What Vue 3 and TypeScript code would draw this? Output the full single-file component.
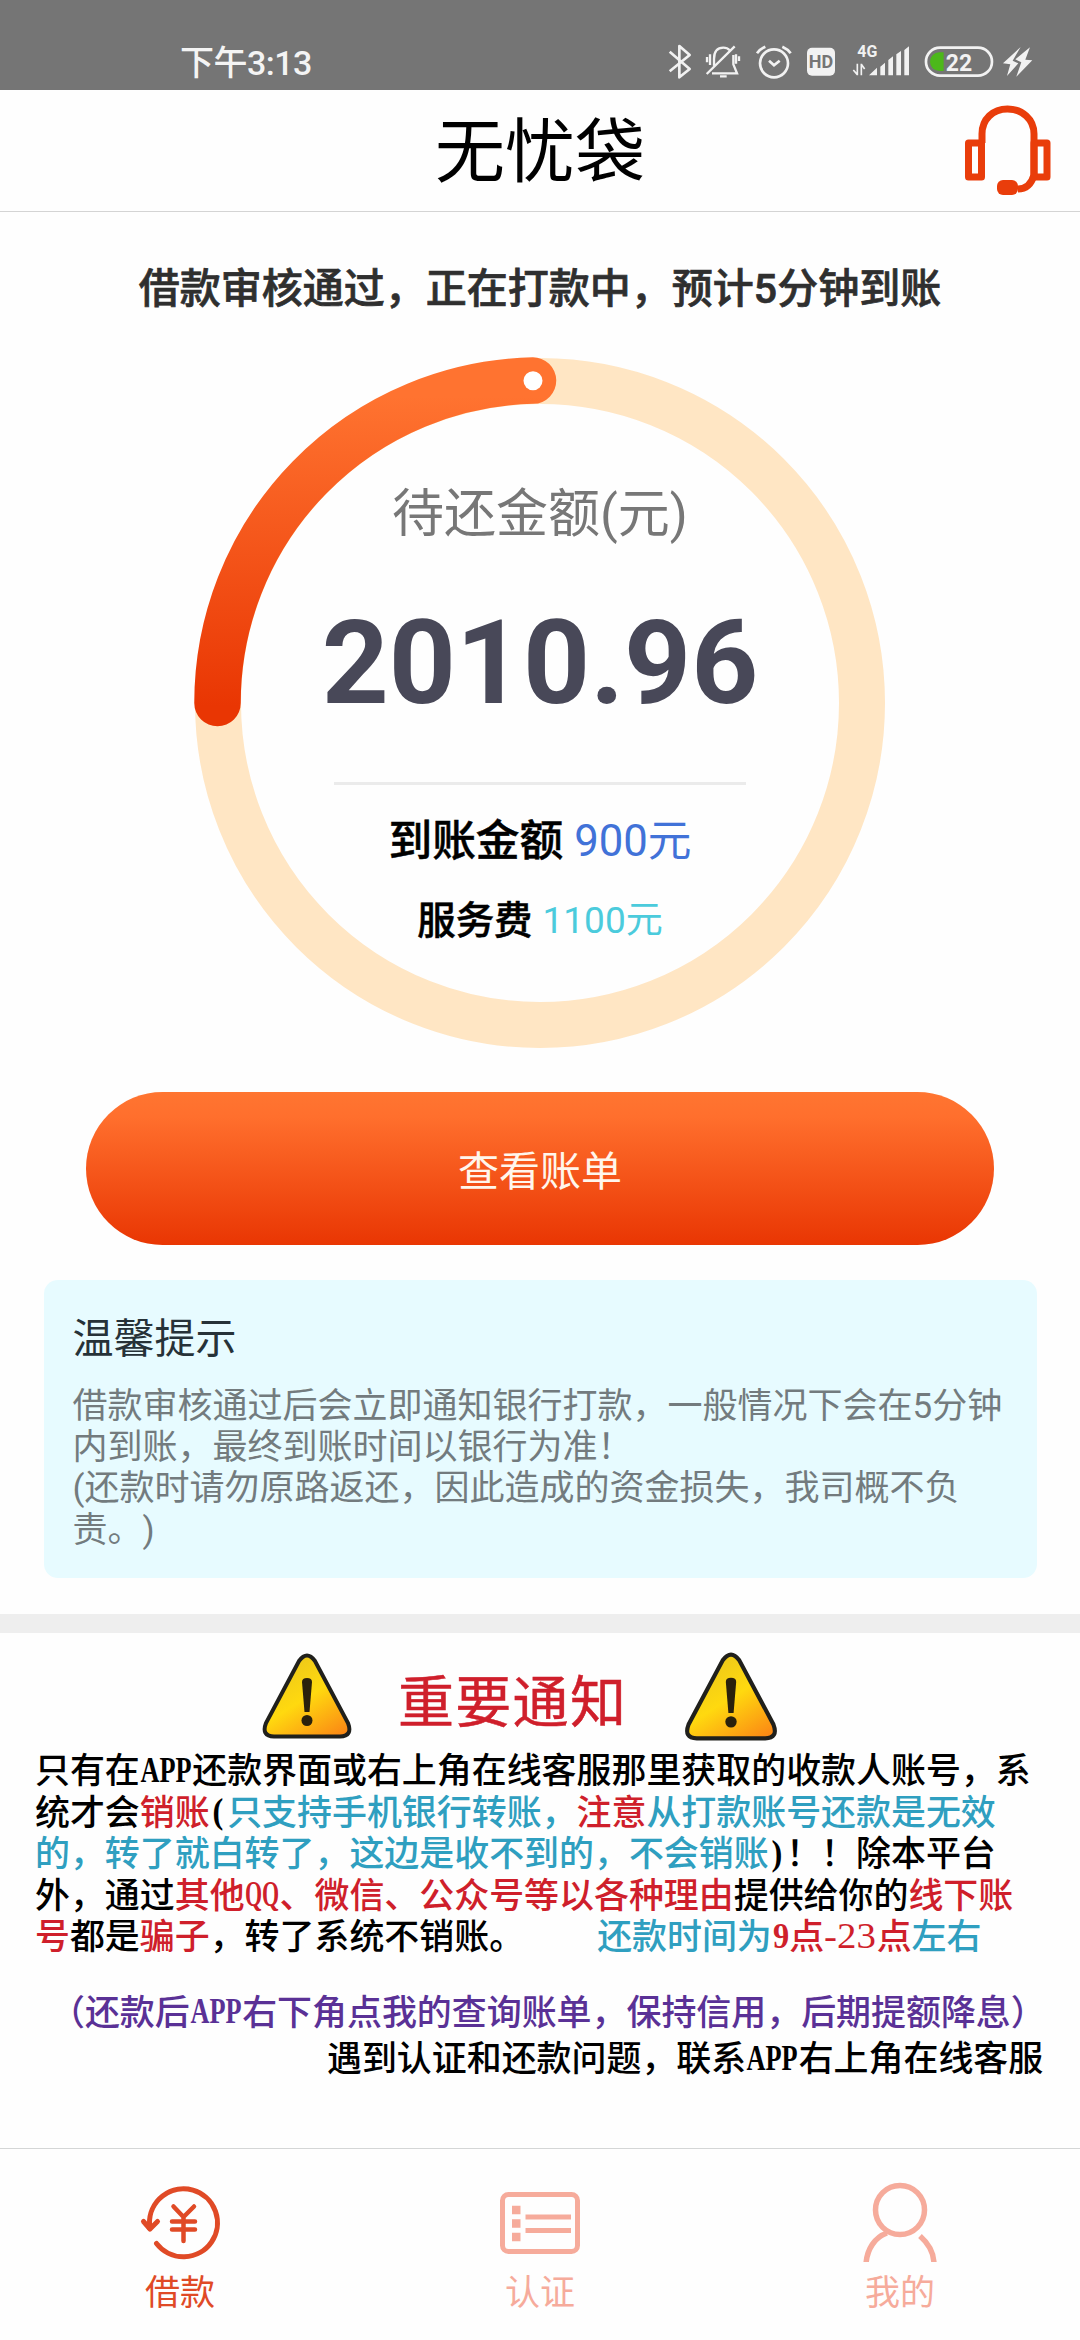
<script setup lang="ts">
interface Run {
  text: string
  tone?: 'red' | 'blue'
  latin?: 'app' | 'qq' | 'digit' | 'range'
  gap?: boolean
}

interface Tab {
  id: 'loan' | 'verify' | 'mine'
  label: string
}

const tabs: Tab[] = [
  { id: 'loan', label: '借款' },
  { id: 'verify', label: '认证' },
  { id: 'mine', label: '我的' },
]
const activeTab: Tab['id'] = 'loan'

const tips: string[] = [
  '借款审核通过后会立即通知银行打款，一般情况下会在5分钟',
  '内到账，最终到账时间以银行为准！',
  '(还款时请勿原路返还，因此造成的资金损失，我司概不负',
  '责。)',
]

const noticeLines: Run[][] = [
  [{ text: '只有在' }, { text: 'APP', latin: 'app' }, { text: '还款界面或右上角在线客服那里获取的收款人账号，系' }],
  [
    { text: '统才会' },
    { text: '销账', tone: 'red' },
    { text: '(', latin: 'digit' },
    { text: '只支持手机银行转账，', tone: 'blue' },
    { text: '注意', tone: 'red' },
    { text: '从打款账号还款是无效', tone: 'blue' },
  ],
  [
    { text: '的，转了就白转了，这边是收不到的，不会销账', tone: 'blue' },
    { text: ')', latin: 'digit' },
    { text: '！！除本平台' },
  ],
  [
    { text: '外，通过' },
    { text: '其他', tone: 'red' },
    { text: 'QQ', tone: 'red', latin: 'qq' },
    { text: '、微信、公众号等以各种理由', tone: 'red' },
    { text: '提供给你的' },
    { text: '线下账', tone: 'red' },
  ],
  [
    { text: '号', tone: 'red' },
    { text: '都是' },
    { text: '骗子', tone: 'red' },
    { text: '，转了系统不销账。' },
    { text: '还款时间为', tone: 'blue', gap: true },
    { text: '9', tone: 'red', latin: 'digit' },
    { text: '点', tone: 'red' },
    { text: '-23', tone: 'red', latin: 'range' },
    { text: '点', tone: 'red' },
    { text: '左右', tone: 'blue' },
  ],
]
</script>

<template>
  <div class="screen">
    <div class="status">
      <span class="clock">下午3:13</span>
      <svg class="status-icons" viewBox="84 70 1096 112" fill="none" stroke="#f2f2f2" stroke-width="8">
        <!-- bluetooth -->
        <path d="M89 96L149 148L118 173V79L149 106L89 155" stroke-linejoin="round" />
        <!-- muted bell -->
        <path d="M222 138V118Q222 84 250 84Q262 84 269 92M280 106V134L291 161H216M240 170H260M200 163L284 80M201 112V128M210 104V136M288 104V132M297 110V124" stroke-width="7" />
        <!-- alarm -->
        <circle cx="402" cy="131" r="42" />
        <path d="M387 123L402 137L419 123M351 101Q360 88 376 81M452 101Q443 88 427 81" />
        <!-- hd badge -->
        <rect x="501" y="84" width="84" height="84" rx="15" fill="#f2f2f2" stroke="none" />
        <text x="543" y="146" class="hd">HD</text>
        <!-- signal -->
        <text x="682" y="111" class="gen">4G</text>
        <path d="M652 132V167M640 151L652 165M664 167V132M664 134L674 148" stroke-width="5" />
        <path d="M687 167L711 144V167ZM721 167V141L735 129V167ZM745 167V121L759 110V167ZM769 167V104L783 94V167ZM793 167V91L807 80V167Z" fill="#f2f2f2" stroke="none" />
        <!-- battery -->
        <rect x="858" y="84" width="198" height="84" rx="42" />
        <path d="M911 98V154H898A28 28 0 0 1 898 98Z" fill="#4cb81b" stroke="none" />
        <text x="957" y="153" class="level">22</text>
        <!-- charging bolt -->
        <path d="M1142 82L1089 131L1111 134L1101 169L1135 131L1118 123ZM1170 83L1126 119L1144 128L1129 171L1177 122L1156 120Z" fill="#f2f2f2" stroke="none" />
      </svg>
    </div>

    <header class="header">
      <h1>无忧袋</h1>
      <svg class="headset" viewBox="0 0 88 92" fill="none" stroke="#e93d0b" stroke-width="7">
        <rect x="4.500" y="38" width="13" height="34" stroke-linejoin="round" />
        <rect x="70" y="38" width="13" height="34" stroke-linejoin="round" />
        <path d="M18 38V29C18 14 29 4 43.500 4S70 14 70 29V70Q66 84 54 84" />
        <rect x="33" y="75" width="21" height="15" rx="6" fill="#e93d0b" stroke="none" />
      </svg>
    </header>

    <main class="main">
      <h2>借款审核通过，正在打款中，预计5分钟到账</h2>

      <section class="gauge">
        <svg class="ring" viewBox="0 0 694 694" fill="none">
          <defs>
            <linearGradient id="arc" gradientUnits="userSpaceOnUse" x1="0" y1="40" x2="0" y2="350">
              <stop offset="0" stop-color="#ff7330" />
              <stop offset="1" stop-color="#e93603" />
            </linearGradient>
          </defs>
          <circle cx="347" cy="347" r="322" stroke="#ffe6c4" stroke-width="46" />
          <path d="M24.500 347A322.500 322.500 0 0 1 340 24.600" stroke="url(#arc)" stroke-width="46.500" stroke-linecap="round" />
          <circle cx="340" cy="24.800" r="9.500" fill="#fff" />
        </svg>
        <div class="amounts">
          <p class="caption">待还金额(元)</p>
          <p class="total">2010.96</p>
          <div class="rule"></div>
          <p class="received"><b>到账金额</b><span>900元</span></p>
          <p class="fee"><b>服务费</b><span>1100元</span></p>
        </div>
      </section>

      <button class="bill" type="button">查看账单</button>

      <section class="tips">
        <h3>温馨提示</h3>
        <p v-for="tip in tips" :key="tip">{{ tip }}</p>
      </section>
    </main>

    <section class="notice">
      <div class="notice-head">
        <svg v-for="n in 2" :key="n" class="warn" :class="'warn-' + n" viewBox="0 0 90 86">
          <defs>
            <linearGradient :id="'warn' + n" x1="0.2" y1="0" x2="0.85" y2="1">
              <stop offset="0" stop-color="#e9c51c" />
              <stop offset="0.5" stop-color="#ffd90f" />
              <stop offset="1" stop-color="#fb8a14" />
            </linearGradient>
          </defs>
          <path d="M37 8Q45-3 53 8L86 70Q91 83 78 83.500H12Q-1 83 4 70Z" :fill="'url(#warn' + n + ')'" stroke="#20201c" stroke-width="4" />
          <path d="M40 29Q40 25 45 25T50 29L47.500 59H42.500Z" fill="#2a210c" />
          <circle cx="45" cy="67.500" r="5.500" fill="#2a210c" />
        </svg>
        <h2>重要通知</h2>
      </div>
      <p v-for="(line, i) in noticeLines" :key="i" class="line">
        <span v-for="(run, j) in line" :key="j" :class="[run.tone, run.latin && 'latin', run.latin, { gap: run.gap }]"><i v-if="run.latin">{{ run.text }}</i><template v-else>{{ run.text }}</template></span>
      </p>
      <p class="line credit">（还款后<span class="latin app"><i>APP</i></span>右下角点我的查询账单，保持信用，后期提额降息）</p>
      <p class="line contact">遇到认证和还款问题，联系<span class="latin app"><i>APP</i></span>右上角在线客服</p>
    </section>

    <nav class="tabs">
      <a v-for="tab in tabs" :key="tab.id" class="tab" :class="{ active: tab.id === activeTab }">
        <svg v-if="tab.id === 'loan'" viewBox="0 0 90 80" fill="none" stroke="currentColor" stroke-width="5" stroke-linecap="round" stroke-linejoin="round">
          <path d="M14.500 46V42A34 34 0 1 1 21.500 61.500" />
          <path d="M8.500 39.500L15 47L22.500 39.500" />
          <path d="M38.500 24.500L48.500 35L59 24.500M48.500 35V59M37 39.500H60M37 47.500H60" stroke-width="4.500" />
        </svg>
        <svg v-else-if="tab.id === 'verify'" viewBox="0 0 90 80" fill="none" stroke="currentColor" stroke-width="5">
          <rect x="7.500" y="12.500" width="75" height="57" rx="6" />
          <path d="M17 28H25.500M17 41.500H25.500M17 55H25.500" stroke-width="8.500" />
          <path d="M30.500 35H76M30.500 48.500H76" />
        </svg>
        <svg v-else viewBox="0 0 90 80" fill="none" stroke="currentColor" stroke-width="5.500">
          <circle cx="45" cy="28" r="24.500" />
          <path d="M11 82C12 67 20 55 32 51M79 82C79 70 73 61 65 54" />
        </svg>
        <span>{{ tab.label }}</span>
      </a>
    </nav>
  </div>
</template>

<style>
body {
  margin: 0;
  background: #fff;
}
</style>

<style scoped>
.screen {
  display: flex;
  flex-direction: column;
  width: 1080px;
  height: 2340px;
  overflow: hidden;
  background: #fefefe;
  color: #000;
  font-family: Roboto, 'Noto Sans CJK SC', sans-serif;
  text-spacing-trim: space-all;
}

h1,
h2,
h3,
p {
  margin: 0;
  font-weight: 400;
  white-space: nowrap;
}

.status {
  flex: none;
  display: flex;
  justify-content: space-between;
  box-sizing: border-box;
  height: 90px;
  padding: 43px 46.500px 0 180px;
  background: #757575;
}

.clock {
  height: 40px;
  color: #f4f4f4;
  font-size: 34px;
  font-weight: 500;
  letter-spacing: -0.500px;
  line-height: 40px;
}

.status-icons {
  width: 365.330px;
  height: 37.330px;
}

.status-icons text {
  stroke: none;
  fill: #f2f2f2;
  font-weight: 700;
  text-anchor: middle;
}

.status-icons .hd {
  fill: #757575;
  font-size: 54px;
}

.status-icons .gen {
  font-size: 48px;
}

.status-icons .level {
  font-size: 69px;
}

.header {
  flex: none;
  display: grid;
  grid-template-columns: 200px 1fr 200px;
  align-items: center;
  box-sizing: border-box;
  height: 122px;
  border-bottom: 1px solid #d4d4d4;
}

h1 {
  grid-column: 2;
  padding-top: 5px;
  font-size: 70px;
  line-height: 100px;
  text-align: center;
}

.headset {
  justify-self: end;
  width: 88px;
  height: 92px;
  margin: 1px 28px 0 0;
}

.main {
  flex: none;
  display: flex;
  flex-direction: column;
  align-items: center;
  height: 1402px;
}

.main h2 {
  margin-top: 47px;
  color: #2f2f2f;
  font-size: 41px;
  font-weight: 500;
  line-height: 60px;
  -webkit-text-stroke: 0.700px currentColor;
}

.gauge {
  display: grid;
  width: 694px;
  height: 694px;
  margin-top: 37px;
}

.ring,
.amounts {
  grid-area: 1 / 1;
}

.amounts {
  display: flex;
  flex-direction: column;
  align-items: center;
}

.caption {
  margin-top: 121px;
  color: #777;
  font-size: 52px;
  line-height: 76px;
}

.total {
  margin-top: 42px;
  color: #484858;
  font-size: 117px;
  font-weight: 700;
  line-height: 137px;
}

.rule {
  width: 412px;
  height: 3px;
  margin-top: 50px;
  background: #ebebeb;
}

.received,
.fee {
  display: flex;
}

.received {
  gap: 11px;
  margin-top: 26px;
  font-size: 43.700px;
  line-height: 60px;
}

.fee {
  gap: 10px;
  margin-top: 23px;
  font-size: 38.400px;
  line-height: 54px;
}

.amounts b {
  font-weight: 500;
  -webkit-text-stroke: 0.500px currentColor;
}

.received span {
  color: #4172d8;
}

.fee span {
  color: #4bcbdc;
  font-size: 37px;
}

.bill {
  width: 908px;
  height: 153px;
  margin-top: 42px;
  padding: 6px 0 0;
  border: 0;
  border-radius: 77px;
  background: linear-gradient(#ff7531, #ff6f2d 16%, #e93603);
  color: #fff6ec;
  font: 41px/60px Roboto, 'Noto Sans CJK SC', sans-serif;
}

.tips {
  box-sizing: border-box;
  width: 993px;
  height: 298px;
  margin-top: 35px;
  padding: 29px 29px 0;
  border-radius: 14px;
  background: #e7fbff;
}

.tips h3 {
  margin-bottom: 17px;
  color: #263238;
  font-size: 41px;
  line-height: 60px;
}

.tips p {
  color: #737b7e;
  font-size: 35px;
  line-height: 41.200px;
}

.notice {
  flex: none;
  box-sizing: border-box;
  height: 534px;
  padding: 18px 0 0 35px;
  border-top: 19px solid #eee;
  font-family: 'Noto Sans CJK SC', sans-serif;
}

.notice-head {
  display: flex;
  align-items: center;
  height: 90px;
  margin-bottom: 6px;
}

.notice-head h2 {
  order: 1;
  margin-left: 46px;
  padding-top: 4px;
  color: #cf1f2b;
  font-size: 56px;
  letter-spacing: 1.300px;
  line-height: 80px;
  -webkit-text-stroke: 0.500px currentColor;
}

.warn {
  width: 90px;
  height: 86px;
}

.warn-1 {
  margin-left: 227px;
}

.warn-2 {
  order: 2;
  width: 94px;
  height: 89px;
  margin-left: 57px;
}

.line {
  display: flex;
  height: 41.500px;
  font-size: 34.950px;
  font-weight: 500;
  line-height: 41.500px;
}

.red {
  color: #cf1f2b;
}

.blue {
  color: #2f9fc0;
}

.gap {
  margin-left: 73px;
}

.latin {
  display: flex;
  justify-content: center;
  box-sizing: border-box;
  width: 17.480px;
  padding-top: 2.500px;
}

.latin i {
  flex: none;
  font-family: 'Liberation Serif', serif;
  font-size: 36px;
  font-style: normal;
  font-weight: 700;
}

.app {
  width: 52.420px;
}

.app i {
  transform: scaleX(0.730);
}

.qq {
  width: 34.950px;
}

.qq i {
  transform: scaleX(0.610);
}

.digit i {
  transform: scaleX(0.900);
}

.range {
  width: 52.420px;
}

.range i {
  font-weight: 400;
  transform: scaleX(1.080);
}

.credit {
  margin: 34px 0 0 15px;
  color: #5a3196;
}

.contact {
  margin: 5px 0 0 292px;
}

.tabs {
  flex: none;
  display: grid;
  grid-template-columns: repeat(3, 1fr);
  box-sizing: border-box;
  height: 192px;
  border-top: 1px solid #d4d6d6;
}

.tab {
  display: flex;
  flex-direction: column;
  align-items: center;
  padding-top: 33px;
  color: #f6ab9b;
  font-size: 35px;
  line-height: 52px;
}

.tab.active {
  color: #e04a26;
}

.tab svg {
  width: 90px;
  height: 80px;
  margin-bottom: 6px;
}
</style>
